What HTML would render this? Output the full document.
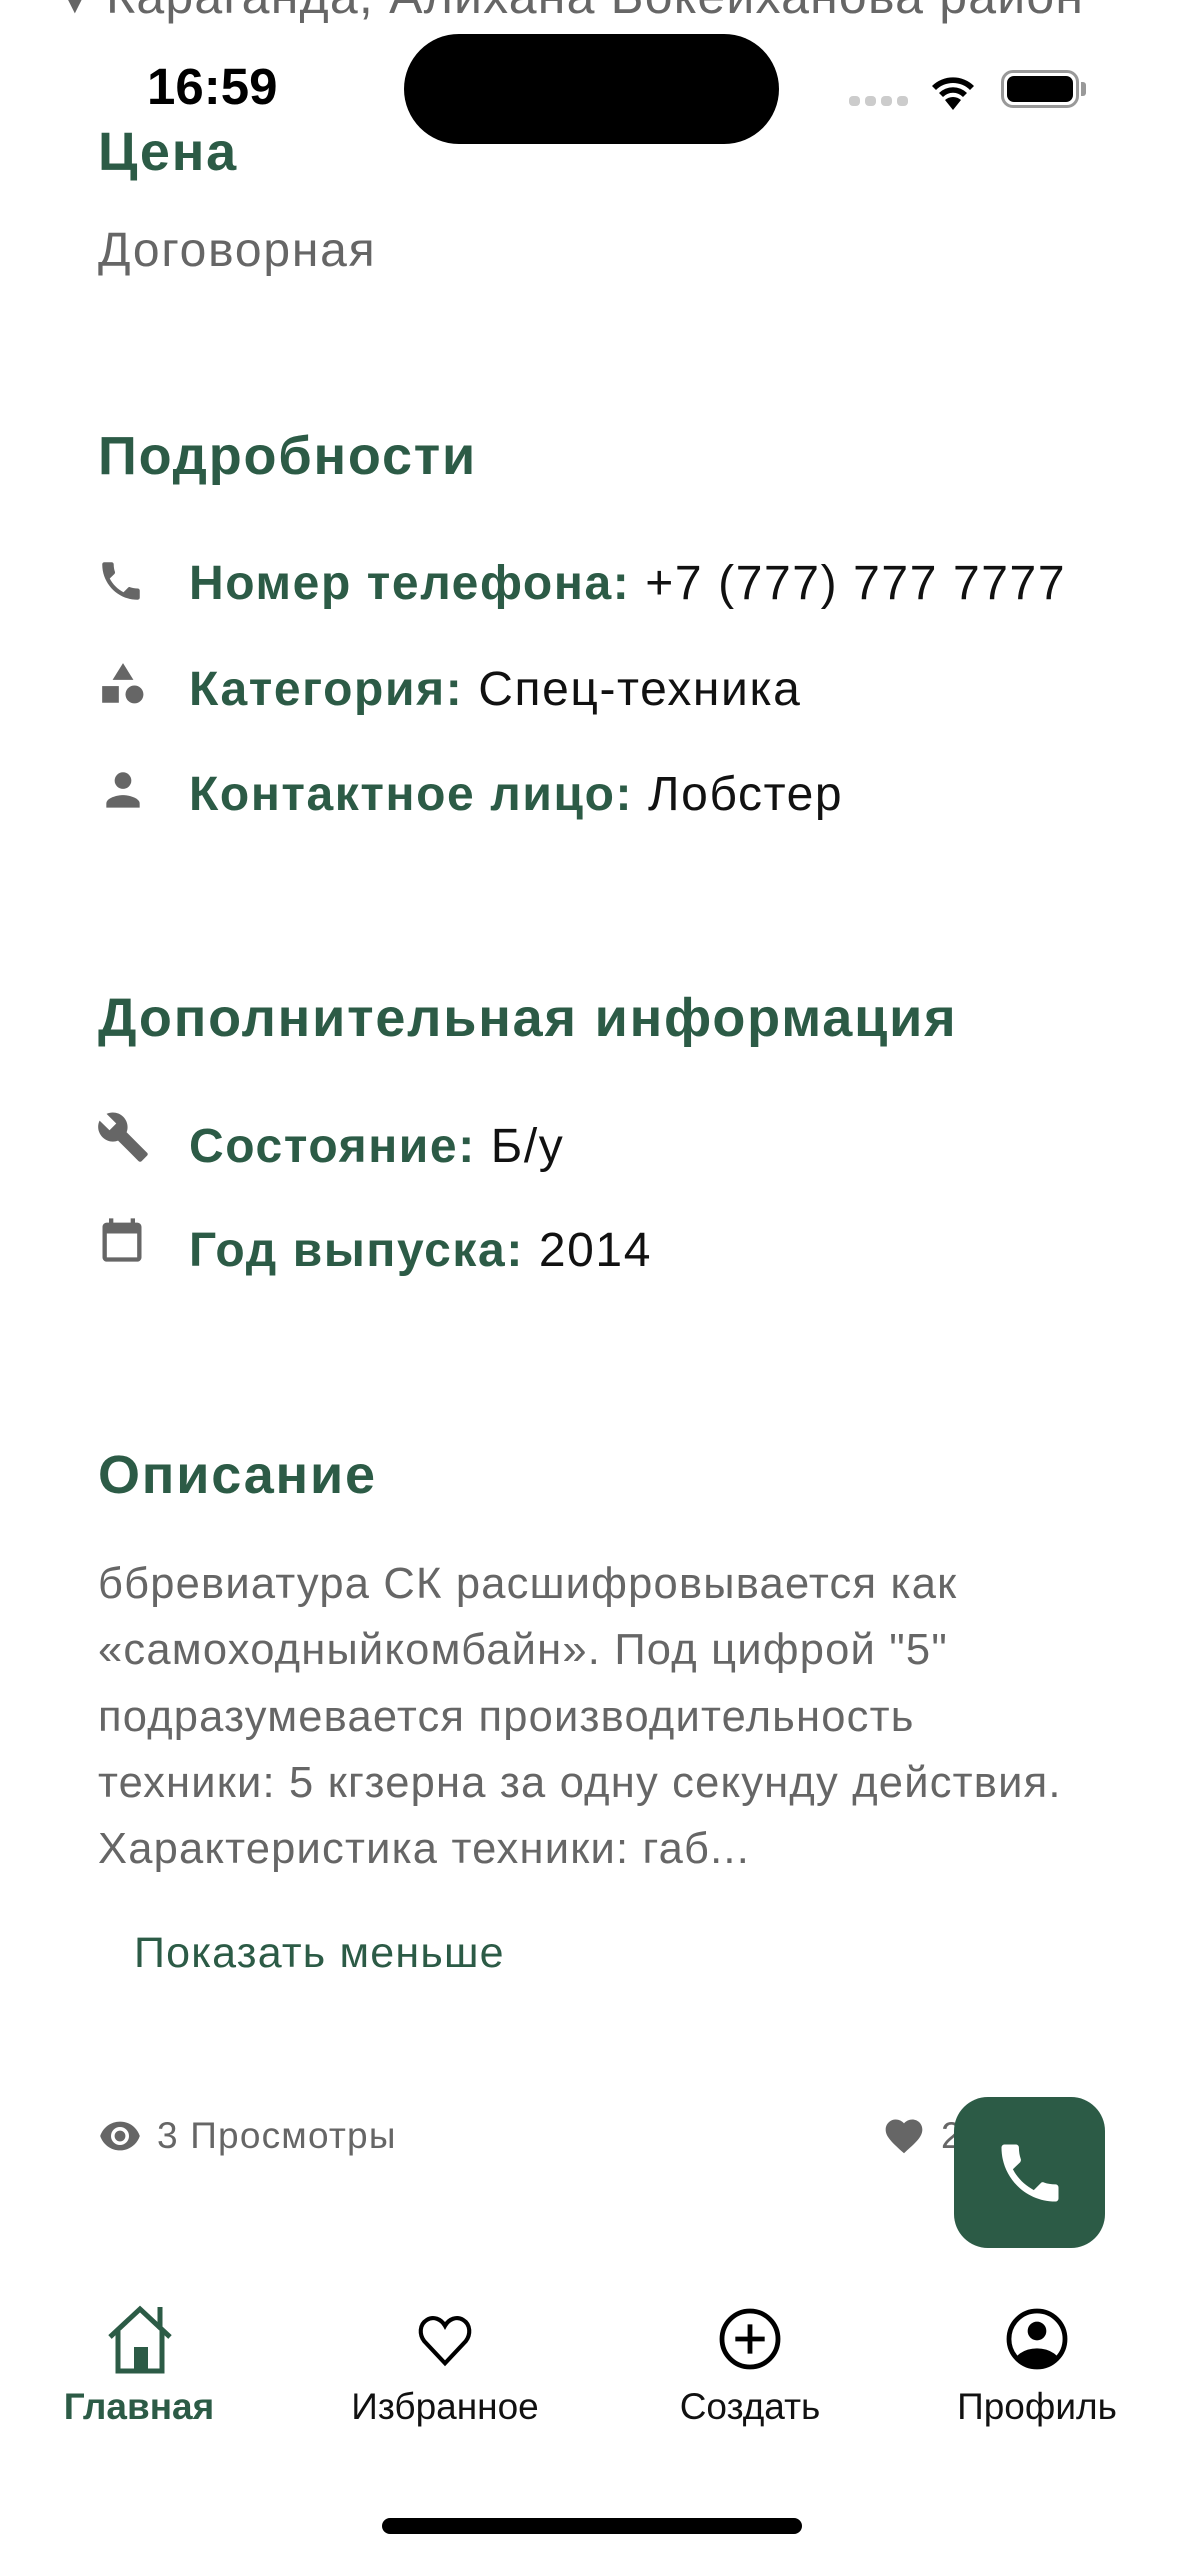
<!DOCTYPE html>
<html><head><meta charset="utf-8"><style>
*{margin:0;padding:0;box-sizing:border-box}
body{width:1179px;height:2556px;background:#fff;position:relative;overflow:hidden;font-family:"Liberation Sans","DejaVu Sans",sans-serif}
.a{position:absolute;white-space:nowrap}
.h{color:#2c5b46;font-weight:bold;font-size:54px;letter-spacing:1.8px;line-height:60px}
.r{font-size:48px;letter-spacing:1.6px;line-height:60px;color:#111}
.r b{color:#2c5b46}
.d{color:#666;font-size:43.5px;letter-spacing:1.2px;line-height:66px;left:98px}
.ic{position:absolute;fill:#666}
.nl{font-size:37px;line-height:44px;text-align:center;width:260px;color:#111}
</style></head><body>
<div class="a" style="left:60px;top:-34px;font-size:50px;color:#666;line-height:60px;letter-spacing:1.2px"><span style="font-size:30px">▼</span> Караганда, Алихана Бокейханова район</div>
<div class="a" style="left:147px;top:59px;font-size:51px;font-weight:bold;line-height:56px">16:59</div>
<div class="a" style="left:404px;top:34px;width:375px;height:110px;background:#000;border-radius:55px"></div>
<div class="a" style="left:849px;top:96px;width:60px;height:10px">
<span style="position:absolute;left:0;width:11px;height:10px;border-radius:4px;background:#ccc"></span><span style="position:absolute;left:16px;width:11px;height:10px;border-radius:4px;background:#ccc"></span><span style="position:absolute;left:32px;width:11px;height:10px;border-radius:4px;background:#ccc"></span><span style="position:absolute;left:48px;width:11px;height:10px;border-radius:4px;background:#ccc"></span></div>
<svg class="a" style="left:928px;top:68px" width="50" height="42" viewBox="0 0 50 42"><path d="M25 42 L17 32 A12 12 0 0 1 33 32 Z M11 25 A20 20 0 0 1 39 25 L35 29 A14 14 0 0 0 15 29 Z M4 18 A30 30 0 0 1 46 18 L42 22 A24 24 0 0 0 8 22 Z" fill="#000"/></svg>
<div class="a" style="left:1001px;top:70px;width:78px;height:38px;border:3px solid #999;border-radius:12px"></div>
<div class="a" style="left:1007px;top:76px;width:66px;height:26px;background:#000;border-radius:7px"></div>
<div class="a" style="left:1081px;top:82px;width:5px;height:14px;background:#999;border-radius:0 3px 3px 0"></div>

<div class="a h" style="left:98px;top:122px">Цена</div>
<div class="a" style="left:98px;top:221px;font-size:48px;color:#666;letter-spacing:1.8px;line-height:60px">Договорная</div>

<div class="a h" style="left:98px;top:426px">Подробности</div>
<svg class="ic" style="left:96px;top:556px" width="50" height="50" viewBox="0 0 24 24"><path d="M6.6 10.8c1.4 2.8 3.8 5.1 6.6 6.6l2.2-2.2c.3-.3.7-.4 1-.2 1.1.4 2.3.6 3.6.6.6 0 1 .4 1 1V20c0 .6-.4 1-1 1C10.6 21 3 13.4 3 4c0-.6.4-1 1-1h3.5c.6 0 1 .4 1 1 0 1.3.2 2.5.6 3.6.1.3 0 .7-.2 1z"/></svg>
<div class="a r" style="left:189px;top:554px"><b>Номер телефона:</b> +7 (777) 777 7777</div>
<svg class="ic" style="left:98px;top:659px" width="50" height="50" viewBox="0 0 24 24"><path d="M12 2l5 8H7z"/><rect x="2" y="13" width="8" height="8"/><circle cx="17.5" cy="17" r="4.3"/></svg>
<div class="a r" style="left:189px;top:660px"><b>Категория:</b> Спец-техника</div>
<svg class="ic" style="left:98px;top:766px" width="50" height="50" viewBox="0 0 24 24"><circle cx="12" cy="7" r="4"/><path d="M4 20v-2c0-2.7 5.3-4 8-4s8 1.3 8 4v2z"/></svg>
<div class="a r" style="left:189px;top:765px"><b>Контактное лицо:</b> Лобстер</div>

<div class="a h" style="left:98px;top:988px">Дополнительная информация</div>
<svg class="ic" style="left:96px;top:1110px" width="54" height="54" viewBox="0 0 24 24"><path d="M22.7 19l-9.1-9.1c.9-2.3.4-5-1.5-6.9-2-2-5-2.4-7.4-1.3L9 6 6 9 1.6 4.7C.4 7.1.9 10.1 2.9 12.1c1.9 1.9 4.6 2.4 6.9 1.5l9.1 9.1c.4.4 1 .4 1.4 0l2.3-2.3c.5-.4.5-1.1.1-1.4z"/></svg>
<div class="a r" style="left:189px;top:1117px"><b>Состояние:</b> Б/у</div>
<svg class="ic" style="left:96px;top:1214px" width="52" height="52" viewBox="0 0 24 24"><path d="M19 4h-1V2h-2v2H8V2H6v2H5c-1.1 0-2 .9-2 2v14c0 1.1.9 2 2 2h14c1.1 0 2-.9 2-2V6c0-1.1-.9-2-2-2zm0 16H5V9h14z"/></svg>
<div class="a r" style="left:189px;top:1221px"><b>Год выпуска:</b> 2014</div>

<div class="a h" style="left:98px;top:1445px">Описание</div>
<div class="a d" style="top:1551px">ббревиатура СК расшифровывается как</div>
<div class="a d" style="top:1617px">«самоходныйкомбайн». Под цифрой "5"</div>
<div class="a d" style="top:1684px">подразумевается производительность</div>
<div class="a d" style="top:1750px">техники: 5 кгзерна за одну секунду действия.</div>
<div class="a d" style="top:1816px">Характеристика техники: габ...</div>
<div class="a" style="left:134px;top:1925px;font-size:43px;color:#2c5b46;letter-spacing:1.2px;line-height:56px">Показать меньше</div>

<svg class="ic" style="left:98px;top:2118px" width="44" height="36" viewBox="0 0 24 20"><path d="M12 2C7 2 2.7 5.1 1 10c1.7 4.9 6 8 11 8s9.3-3.1 11-8c-1.7-4.9-6-8-11-8zm0 13a5 5 0 1 1 0-10 5 5 0 0 1 0 10zm0-8a3 3 0 1 0 0 6 3 3 0 0 0 0-6z"/></svg>
<div class="a" style="left:157px;top:2114px;font-size:37px;color:#666;letter-spacing:1.2px;line-height:44px">3 Просмотры</div>
<svg class="ic" style="left:882px;top:2114px" width="44" height="44" viewBox="0 0 24 24"><path d="M12 21.4l-1.5-1.3C5.4 15.4 2 12.3 2 8.5 2 5.4 4.4 3 7.5 3c1.7 0 3.4.8 4.5 2.1C13.1 3.8 14.8 3 16.5 3 19.6 3 22 5.4 22 8.5c0 3.8-3.4 6.9-8.5 11.5z"/></svg>
<div class="a" style="left:941px;top:2114px;font-size:37px;color:#666;line-height:44px">2</div>
<div class="a" style="left:954px;top:2097px;width:151px;height:151px;background:#2c5b46;border-radius:34px"></div>
<svg class="a" style="left:992px;top:2135px" width="76" height="76" viewBox="0 0 24 24"><path fill="#fff" d="M6.6 10.8c1.4 2.8 3.8 5.1 6.6 6.6l2.2-2.2c.3-.3.7-.4 1-.2 1.1.4 2.3.6 3.6.6.6 0 1 .4 1 1V20c0 .6-.4 1-1 1C10.6 21 3 13.4 3 4c0-.6.4-1 1-1h3.5c.6 0 1 .4 1 1 0 1.3.2 2.5.6 3.6.1.3 0 .7-.2 1z"/></svg>

<svg class="a" style="left:104px;top:2305px" width="72" height="70" viewBox="0 0 36 35"><path d="M3 16 L18 2 L33 16 M7 13 V33 H29 V13 M28 12 V1" fill="none" stroke="#2c5b46" stroke-width="2.5"/><rect x="15" y="21" width="7" height="12" fill="#2c5b46"/></svg>
<svg class="a" style="left:413px;top:2309px" width="64" height="62" viewBox="0 0 24 24"><path d="M12 21L4 12.5C2 10 2 6 5 4.2 7.5 2.7 10.5 3.8 12 6.5 13.5 3.8 16.5 2.7 19 4.2 22 6 22 10 20 12.5Z" fill="none" stroke="#000" stroke-width="1.6"/></svg>
<svg class="a" style="left:718px;top:2307px" width="64" height="64" viewBox="0 0 24 24"><circle cx="12" cy="12" r="10.5" fill="none" stroke="#000" stroke-width="1.8"/><path d="M12 6.5v11M6.5 12h11" stroke="#000" stroke-width="1.8"/></svg>
<svg class="a" style="left:1005px;top:2307px" width="64" height="64" viewBox="0 0 24 24"><defs><clipPath id="c"><circle cx="12" cy="12" r="10"/></clipPath></defs><circle cx="12" cy="12" r="10.5" fill="none" stroke="#000" stroke-width="1.8"/><circle cx="12" cy="9" r="3.5"/><ellipse cx="12" cy="22" rx="9" ry="6.5" clip-path="url(#c)"/></svg>
<div class="a nl" style="left:9px;top:2385px;color:#2c5b46;font-weight:bold">Главная</div>
<div class="a nl" style="left:315px;top:2385px">Избранное</div>
<div class="a nl" style="left:620px;top:2385px">Создать</div>
<div class="a nl" style="left:907px;top:2385px">Профиль</div>
<div class="a" style="left:382px;top:2518px;width:420px;height:16px;background:#000;border-radius:8px"></div>
</body></html>
